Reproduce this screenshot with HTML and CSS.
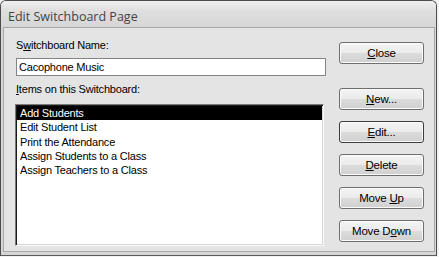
FILE: index.html
```html
<!DOCTYPE html>
<html lang="en">
<head>
  <meta charset="UTF-8">
  <title>Edit Switchboard Page</title>
  <link rel="stylesheet" href="styles.css">
</head>
<body>

  <div class="window">
    <div class="titlebar">Edit Switchboard Page</div>

    <div class="client">
      <div class="main">
        <label class="label" for="sbName">S<u>w</u>itchboard Name:</label>
        <input class="textbox" id="sbName" type="text" value="Cacophone Music">

        <div class="label items-label"><u>I</u>tems on this Switchboard:</div>
        <ul class="listbox">
          <li class="selected">Add Students</li>
          <li>Edit Student List</li>
          <li>Print the Attendance</li>
          <li>Assign Students to a Class</li>
          <li>Assign Teachers to a Class</li>
        </ul>
      </div>

      <div class="buttons">
        <button class="btn btn-close"><u>C</u>lose</button>
        <button class="btn btn-new"><u>N</u>ew...</button>
        <button class="btn btn-default"><u>E</u>dit...</button>
        <button class="btn"><u>D</u>elete</button>
        <button class="btn">Move <u>U</u>p</button>
        <button class="btn">Move D<u>o</u>wn</button>
      </div>
    </div>
  </div>

</body>
</html>
```

FILE: styles.css
```css
body {
  margin: 0;
  background: #f2f2f2;
  font-family: "Liberation Sans", Arial, sans-serif;
  font-size: 11px;
  letter-spacing: -0.2px;
  color: #000;
}
.window {
  width: 435px;
  height: 254px;
  border: 1px solid #4c4c4c;
  border-bottom-color: #5a5a5a;
  border-radius: 6px 6px 0 0;
  background: #d6d6d6;
  display: flex;
  flex-direction: column;
}
.titlebar {
  height: 23px;
  padding: 3px 0 0 7px;
  line-height: 26px;
  font-family: "Open Sans", "Liberation Sans", sans-serif;
  font-size: 12.5px;
  letter-spacing: 0;
  color: #444;
  border-radius: 5px 5px 0 0;
  background: linear-gradient(#efefef, #dedede 40%, #d6d6d6);
}
.client {
  flex: 1;
  margin: 0 1px 3px 2px;
  border: 1px solid #a8a8a8;
  background: #e4e4e4;
  display: flex;
  padding: 10px 0 0 11px;
}
.main {
  width: 311px;
  display: flex;
  flex-direction: column;
}
.label {
  display: block;
  height: 14px;
  line-height: 14px;
  margin-left: 1px;
}
.textbox {
  margin: 6px 0 0 1px;
  width: 310px;
  height: 18px;
  box-sizing: border-box;
  border: 1px solid #858585;
  background: #fff;
  padding: 0 2px;
  font-family: inherit;
  font-size: 11px;
  letter-spacing: -0.2px;
  outline: none;
}
.items-label {
  margin-top: 6px;
}
.listbox {
  list-style: none;
  margin: 8px 0 0;
  padding: 1px;
  width: 309px;
  height: 142px;
  box-sizing: border-box;
  border-top: 1px solid #7a7a7a;
  border-left: 1px solid #7a7a7a;
  border-right: 1px solid #f8f8f8;
  border-bottom: 1px solid #f8f8f8;
  box-shadow: inset 1px 1px 0 #1a1a1a, inset -1px -1px 0 #d8d8d8;
  background: #fff;
}
.listbox li {
  height: 14.25px;
  line-height: 14px;
  padding-left: 3px;
}
.listbox li.selected {
  background: #000;
  color: #fff;
}
.buttons {
  margin-left: 13px;
  display: flex;
  flex-direction: column;
  padding-top: 4px;
}
.btn {
  width: 85px;
  height: 22px;
  margin-top: 11px;
  padding: 0;
  border: 1px solid #6e6e6e;
  border-radius: 3px;
  background: linear-gradient(#f4f4f4, #ebebeb 48%, #dcdcdc 52%, #d0d0d0);
  box-shadow: inset 0 0 0 1px #fbfbfb;
  font-family: inherit;
  font-size: 11.5px;
  letter-spacing: -0.2px;
  color: #000;
}
.btn-close {
  margin-top: 0;
}
.btn-new {
  margin-top: 24px;
}
.btn-default {
  border-color: #3c3c3c;
}
```
